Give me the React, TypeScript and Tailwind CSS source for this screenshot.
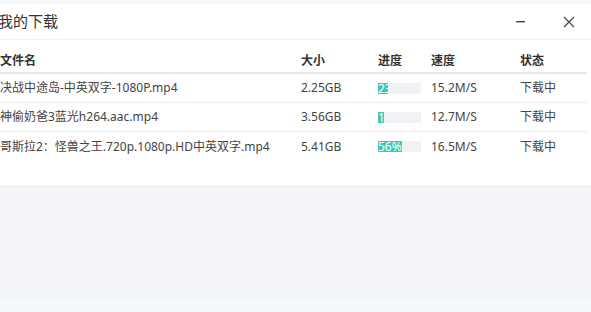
import React from "react";

interface DownloadItem {
	name: string;
	size: string;
	progress: number;
	speed: string;
	status: string;
}

const items: DownloadItem[] = [
	{ name: "决战中途岛-中英双字-1080P.mp4", size: "2.25GB", progress: 23, speed: "15.2M/S", status: "下载中" },
	{ name: "神偷奶爸3蓝光h264.aac.mp4", size: "3.56GB", progress: 13, speed: "12.7M/S", status: "下载中" },
	{ name: "哥斯拉2：怪兽之王.720p.1080p.HD中英双字.mp4", size: "5.41GB", progress: 56, speed: "16.5M/S", status: "下载中" },
];

const ProgressBar: React.FC<{ value: number }> = ({ value }) => (
	<div className="relative h-[11px] w-[43px] bg-[#f1f2f5] overflow-hidden">
		<div
			className="h-full bg-[#3fc8b5] overflow-hidden whitespace-nowrap text-white text-[12px] leading-[11px]"
			style={{ width: `${value}%` }}
		>
			{value}%
		</div>
	</div>
);

export default function App() {
	return (
		<div
			className="w-[591px] h-[312px] flex flex-col bg-[#f5f8fd] text-[#333]"
			style={{ fontFamily: '"Noto Sans", "Noto Sans CJK SC", sans-serif' }}
		>
			<div className="h-[4px]" />
			<div className="bg-white flex flex-col h-[183px] border-b border-[#e9eaee]">
				<div className="h-[36px] flex items-center justify-between border-b border-[#f0f0f0] -ml-[2px] pr-[16px]">
					<span className="text-[15px] text-[#333]">我的下载</span>
					<div className="flex items-center gap-[38px]">
						<svg width="9" height="2" viewBox="0 0 9 2">
							<rect width="9" height="1.4" fill="#444" />
						</svg>
						<svg width="12" height="12" viewBox="0 0 12 12">
							<path d="M1 1L11 11M11 1L1 11" stroke="#444" strokeWidth="1.2" />
						</svg>
					</div>
				</div>
				<div className="w-[587px] mt-[9px] text-[12px]">
					<div className="flex items-center h-[25px] border-b-2 border-[#e8e8e8] font-semibold text-[#333]">
						<div className="w-[301px]">文件名</div>
						<div className="w-[77px]">大小</div>
						<div className="w-[53px]">进度</div>
						<div className="w-[89px]">速度</div>
						<div>状态</div>
					</div>
					{items.map((item, i) => (
						<div
							key={item.name}
							className={
								"flex items-center h-[29px] text-[#444] " +
								(i < items.length - 1 ? "border-b border-[#ececec]" : "")
							}
						>
							<div className="w-[301px] whitespace-nowrap">{item.name}</div>
							<div className="w-[77px]">{item.size}</div>
							<div className="w-[53px]">
								<ProgressBar value={item.progress} />
							</div>
							<div className="w-[89px]">{item.speed}</div>
							<div>{item.status}</div>
						</div>
					))}
				</div>
			</div>
			<div className="h-[113px] bg-[#f4f5f9]" />
		</div>
	);
}
